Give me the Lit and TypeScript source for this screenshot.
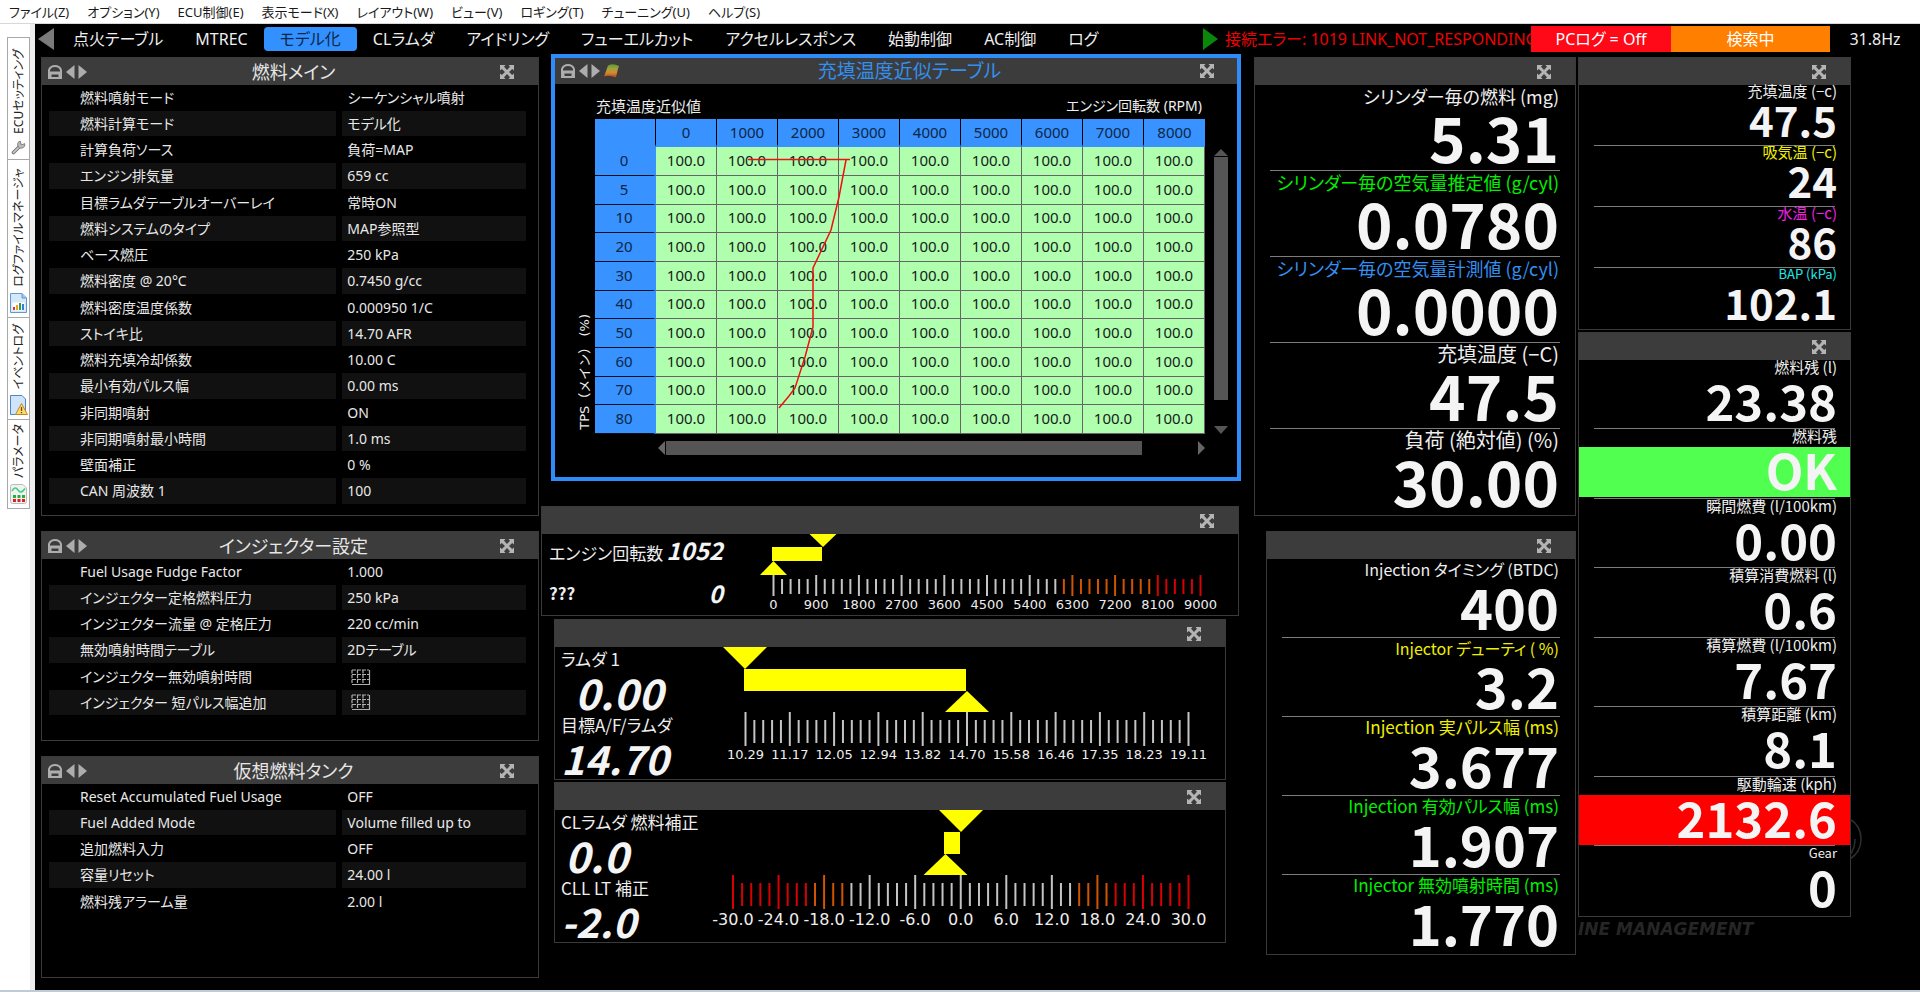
import { LitElement, html, svg, css, nothing } from "lit";
import { customElement, state } from "lit/decorators.js";
import { classMap } from "lit/directives/class-map.js";

const MENUS = ["ファイル(Z)", "オプション(Y)", "ECU制御(E)", "表示モード(X)", "レイアウト(W)", "ビュー(V)", "ロギング(T)", "チューニング(U)", "ヘルプ(S)"];
const TABS = ["点火テーブル", "MTREC", "モデル化", "CLラムダ", "アイドリング", "フューエルカット", "アクセルレスポンス", "始動制御", "AC制御", "ログ"];

type Row = [string, string];
const FUEL_MAIN: Row[] = [
  ["燃料噴射モード", "シーケンシャル噴射"],
  ["燃料計算モード", "モデル化"],
  ["計算負荷ソース", "負荷=MAP"],
  ["エンジン排気量", "659 cc"],
  ["目標ラムダテーブルオーバーレイ", "常時ON"],
  ["燃料システムのタイプ", "MAP参照型"],
  ["ベース燃圧", "250 kPa"],
  ["燃料密度 @ 20°C", "0.7450 g/cc"],
  ["燃料密度温度係数", "0.000950 1/C"],
  ["ストイキ比", "14.70 AFR"],
  ["燃料充填冷却係数", "10.00 C"],
  ["最小有効パルス幅", "0.00 ms"],
  ["非同期噴射", "ON"],
  ["非同期噴射最小時間", "1.0 ms"],
  ["壁面補正", "0 %"],
  ["CAN 周波数 1", "100"],
];
const INJECTOR: Row[] = [
  ["Fuel Usage Fudge Factor", "1.000"],
  ["インジェクター定格燃料圧力", "250 kPa"],
  ["インジェクター流量 @ 定格圧力", "220 cc/min"],
  ["無効噴射時間テーブル", "2Dテーブル"],
  ["インジェクター無効噴射時間", "#grid"],
  ["インジェクター 短パルス幅追加", "#grid"],
];
const TANK: Row[] = [
  ["Reset Accumulated Fuel Usage", "OFF"],
  ["Fuel Added Mode", "Volume filled up to"],
  ["追加燃料入力", "OFF"],
  ["容量リセット", "24.00 l"],
  ["燃料残アラーム量", "2.00 l"],
];

interface Reading { label: string; value: string; tone?: string; size?: string; fill?: string }
const CYLINDER: Reading[] = [
  { label: "シリンダー毎の燃料 (mg)", value: "5.31" },
  { label: "シリンダー毎の空気量推定値 (g/cyl)", value: "0.0780", tone: "green" },
  { label: "シリンダー毎の空気量計測値 (g/cyl)", value: "0.0000", tone: "blue" },
  { label: "充填温度 (−C)", value: "47.5", size: "wide" },
  { label: "負荷 (絶対値) (%)", value: "30.00", size: "wide" },
];
const INJECTION: Reading[] = [
  { label: "Injection タイミング (BTDC)", value: "400", size: "small" },
  { label: "Injector デューティ ( %)", value: "3.2", tone: "yellow", size: "small" },
  { label: "Injection 実パルス幅 (ms)", value: "3.677", tone: "yellow" },
  { label: "Injection 有効パルス幅 (ms)", value: "1.907", tone: "green" },
  { label: "Injector 無効噴射時間 (ms)", value: "1.770", tone: "green" },
];
const TEMPS: Reading[] = [
  { label: "充填温度 (−c)", value: "47.5" },
  { label: "吸気温 (−c)", value: "24", tone: "yellow" },
  { label: "水温 (−c)", value: "86", tone: "magenta" },
  { label: "BAP (kPa)", value: "102.1", tone: "cyan", size: "small" },
];
const TRIP: Reading[] = [
  { label: "燃料残 (l)", value: "23.38" },
  { label: "燃料残", value: "OK", fill: "ok" },
  { label: "瞬間燃費 (l/100km)", value: "0.00" },
  { label: "積算消費燃料 (l)", value: "0.6" },
  { label: "積算燃費 (l/100km)", value: "7.67" },
  { label: "積算距離 (km)", value: "8.1" },
  { label: "駆動輪速 (kph)", value: "2132.6", fill: "alarm" },
  { label: "Gear", value: "0", size: "small" },
];

const RPM = [0, 1000, 2000, 3000, 4000, 5000, 6000, 7000, 8000];
const TPS = [0, 5, 10, 20, 30, 40, 50, 60, 70, 80];

interface Scale {
  w: number; h: number; x0: number; x1: number;
  major: [number, number]; minor: [number, number];
  bar: [number, number, number, number];
  down: number; up: number; half: number; font: number; base: number;
  labels: string[]; zone: (i: number) => string;
}
const GREY = "#c4c4c4", ORANGE = "#d25400", RED = "#d80000";
const RPM_SCALE: Scale = {
  w: 496, h: 81, x0: 31.5, x1: 458.5, major: [41, 62], minor: [45, 60],
  bar: [30, 80, 13, 27], down: 81, up: 31.5, half: 13.5, font: 13, base: 75,
  labels: ["0", "900", "1800", "2700", "3600", "4500", "5400", "6300", "7200", "8100", "9000"],
  zone: (i) => (i >= 45 ? RED : i >= 34 ? ORANGE : GREY),
};
const LAMBDA_SCALE: Scale = {
  w: 525, h: 132, x0: 45.5, x1: 488.5, major: [65, 99], minor: [73, 96],
  bar: [44, 266, 22, 44], down: 45, up: 267, half: 22, font: 13, base: 112,
  labels: ["10.29", "11.17", "12.05", "12.94", "13.82", "14.70", "15.58", "16.46", "17.35", "18.23", "19.11"],
  zone: () => GREY,
};
const TRIM_SCALE: Scale = {
  w: 525, h: 132, x0: 33, x1: 488.5, major: [65, 99], minor: [73, 96],
  bar: [244, 260, 22, 44], down: 261, up: 245.5, half: 22, font: 16, base: 115,
  labels: ["-30.0", "-24.0", "-18.0", "-12.0", "-6.0", "0.0", "6.0", "12.0", "18.0", "24.0", "30.0"],
  zone: (i) => (i <= 8 || i >= 42 ? RED : i <= 12 || i >= 38 ? ORANGE : GREY),
};

const lockIcon = html`<svg width="14" height="14" viewBox="0 0 14 14" aria-hidden="true">
  <path d="M1 7V5Q2.500 1 7 1T13 5V7" fill="none" stroke="#adadad" stroke-width="2"/><path d="M0 6.500H14V14H0ZM3.500 9.500V12H10.500V9.500Z" fill="#adadad" fill-rule="evenodd"/></svg>`;
const stepIcon = html`<svg width="21" height="14" viewBox="0 0 21 14" fill="#adadad" aria-hidden="true">
  <path d="M8.500 0V14L0 7Z"/><path d="M12.500 0V14L21 7Z"/></svg>`;
const surfaceIcon = html`<svg width="15" height="14" viewBox="0 0 15 14" aria-hidden="true">
  <defs><linearGradient id="heat" x1="0" y1="0" x2="0" y2="1"><stop offset="0" stop-color="#5f9a3a"/><stop offset=".35" stop-color="#a8a038"/><stop offset=".65" stop-color="#d08a30"/><stop offset="1" stop-color="#b83c20"/></linearGradient></defs>
  <path d="M4 1.500Q9-1 15 2Q13.500 6 13 9Q12.500 12 11.500 13.500Q6 10.500 0 12.500Q2.500 6 4 1.500Z" fill="url(#heat)"/></svg>`;
const expandIcon = html`<svg width="14" height="14" viewBox="0 0 14 14" fill="#b4b4b4" aria-hidden="true">
  <path d="M0 0H5.500L4 1.800L7 5L10 1.800L8.500 0H14V5.500L12.200 4L9 7L12.200 10L14 8.500V14H8.500L10 12.200L7 9L4 12.200L5.500 14H0V8.500L1.800 10L5 7L1.800 4L0 5.500Z"/></svg>`;
const gridIcon = html`<svg class="gridicon" width="20" height="17" viewBox="0 0 20 17" fill="none" stroke="#b0b0b0" stroke-width="1.200" role="img" aria-label="テーブル">
  <path d="M1 1H18M1 5.500H18M1 10.500H18" stroke-dasharray="4 1"/><path d="M1 15.500H19M18.500 1V16"/><path d="M1 1V14M6.500 1V14M12 1V14" stroke-dasharray="3.500 1.200"/></svg>`;
const wrench = html`<svg width="15" height="15" viewBox="0 0 15 15" aria-hidden="true"><path d="M2.500 12.500L9 6" stroke="#777" stroke-width="3.600" stroke-linecap="round"/><path d="M2.500 12.500L9 6" stroke="#ccc" stroke-width="1.600" stroke-linecap="round"/><path d="M13.500 3.500A3.500 3.500 0 1 1 9.500 1.200L9.800 4.200L12 4.500Z" fill="#bbb" stroke="#777" stroke-width=".9"/></svg>`;
const docIcon = html`<svg width="17" height="20" viewBox="0 0 17 20" aria-hidden="true"><path d="M.5.5H12L16.500 5V19.500H.5Z" fill="#d4e8f8" stroke="#5f9ad0"/><path d="M12 .5V5H16.500" fill="#9cc6ee" stroke="#5f9ad0"/><path d="M2.500 9.500H14.500V17.500H2.500Z" fill="#fff"/><path d="M4 14V17" stroke="#e03030" stroke-width="2"/><path d="M7 12V17" stroke="#f0a020" stroke-width="2"/><path d="M10 10V17" stroke="#30a040" stroke-width="2"/><path d="M13 11V17" stroke="#3080e0" stroke-width="2"/></svg>`;
const eventIcon = html`<svg width="18" height="20" viewBox="0 0 18 20" aria-hidden="true"><path d="M.5.5H12L15.500 4V19.500H.5Z" fill="#cfe4fa" stroke="#4f86c6"/><path d="M11.500 8.500L17.500 19.500H5.500Z" fill="#ffd871" stroke="#c08c20"/><path d="M11.500 12V16M11.500 17V18.200" stroke="#7a4a00" stroke-width="1.300"/></svg>`;
const paramIcon = html`<svg width="17" height="20" viewBox="0 0 17 20" aria-hidden="true"><path d="M2.500.5H13L16.500 4V17.500Q16.500 19.500 14.500 19.500H2.500Q.5 19.500 .5 17.500V2.500Q.5.5 2.500.5Z" fill="#f0f2f2" stroke="#bbb"/><path d="M2 7Q5 1.500 8 6T15 4.500" fill="none" stroke="#40d080" stroke-width="1.600"/><path d="M3 12.500H15" stroke="#20b040" stroke-width="3" stroke-dasharray="3 1.500"/><path d="M3 16.500H15" stroke="#e02020" stroke-width="3" stroke-dasharray="3 1.500"/></svg>`;

@customElement("app-root")
export class AppRoot extends LitElement {
  static styles = css`
    :host { display: block; min-height: 100vh; background: #fff; font-family: "Noto Sans", "Noto Sans CJK JP", sans-serif; font-size: 14px; font-feature-settings: "palt"; color: #eee; }
    * { box-sizing: border-box; }
    button { font: inherit; font-feature-settings: inherit; color: inherit; background: none; border: 0; padding: 0; margin: 0; white-space: nowrap; cursor: pointer; }
    svg { display: block; flex: none; }
    .app { display: flex; flex-direction: column; min-height: 100vh; border-bottom: 2px solid #bfcbd8; }
    .menu { display: flex; gap: 18px; height: 24px; padding-left: 9px; color: #1a1a1a; align-items: center; border-bottom: 1px solid #d8d8d8; }
    .menu button { font-size: 13px; line-height: 20px; }
    .main { display: flex; flex: 1; }
    .side { width: 35px; flex: none; padding: 13px 0 0 7px; border-right: 5px solid #ededed; color: #222; }
    .side button { display: flex; flex-direction: column; align-items: center; justify-content: flex-end; gap: 6px; width: 23px; border: 1px solid #a8a8a8; border-bottom: 0; padding: 6px 0 4px; background: #fff; }
    .side button:last-child { border-bottom: 1px solid #a8a8a8; }
    .side span { writing-mode: vertical-rl; text-orientation: sideways; transform: rotate(180deg); font-size: 12px; line-height: 20px; }
    .side .ecu { height: 122px; } .side .files { height: 158px; } .side .events { height: 102px; } .side .prm { height: 90px; }
    .desk { flex: 1; min-width: 0; background: #000; }

    .tabs { display: flex; align-items: center; height: 30px; padding-left: 3px; font-size: 16px; }
    .tabs .set { display: flex; flex: 1; margin-left: 3px; }
    .tabs .set button { height: 24px; line-height: 24px; padding: 0 16px; border-radius: 4px; }
    .tabs .set button.on { background: #3390ff; color: #0c2746; }
    .error { width: 306px; margin-left: 7px; overflow: hidden; white-space: nowrap; color: #f00000; font-size: 16px; line-height: 26px; }
    .flag { height: 26px; line-height: 26px; text-align: center; font-size: 16px; color: #fff; }
    .pclog { width: 140px; background: #ff0818; }
    .search { width: 159px; background: #ff8000; }
    .hz { width: 90px; text-align: center; font-size: 16px; }

    .board { display: grid; grid-template-columns: 498fr 700fr 333fr 273fr; gap: 2px; padding: 0 69px 11px 6px; align-items: start; }
    .col { display: flex; flex-direction: column; gap: 15px; padding-top: 3px; min-width: 0; }
    .col.mid { gap: 3px; padding-top: 0; }
    .col.cyl { padding-left: 11px; }
    .col.trip { gap: 2px; }

    .panel { border: 1px solid #3a3a3a; background: #000; min-width: 0; }
    .panel header { display: flex; align-items: center; height: 27px; background: #3c3c3c; padding: 0 24px 0 6px; }
    .panel header .tools { display: flex; gap: 4px; align-items: center; }
    .panel h2 { flex: 1; margin: 0; text-align: center; font-size: 18px; line-height: 26px; font-weight: 400; color: #e6e6e6; white-space: nowrap; }
    .map { border: 4px solid #2e8cf8; margin: 0 0 22px 10px; }
    .map header { height: 26px; padding-right: 23px; }
    .map h2 { font-size: 19px; color: #3390f0; }

    .params { width: 100%; border-collapse: separate; border-spacing: 6px 0; table-layout: fixed; padding: 0 6px 0 1px; color: #e8e8e8; font-size: 14px; line-height: 20px; }
    .params th { width: 61%; font-weight: 400; text-align: left; padding: 1px 0 1px 31px; white-space: nowrap; }
    .params td { padding: 1px 0 1px 5px; white-space: nowrap; }
    .params tr { height: 26px; }
    .params tr:nth-child(4n) { height: 27px; }
    .params tr:nth-child(even) > * { background: #111; border-bottom: 1px solid #000; }
    .fuel { padding-bottom: 10px; }
    .inj { padding-bottom: 24px; }
    .tank { padding-bottom: 62px; }
    .gridicon { margin-left: 4px; }

    .mapbody { display: grid; grid-template-columns: 40px 1fr 14px; padding: 11px 9px 22px 0; }
    .axes { grid-column: 2; display: flex; justify-content: space-between; font-size: 15px; line-height: 22px; padding: 0 3px 2px 1px; }
    .axes .x { font-size: 14px; }
    .ylabel { grid-column: 1; grid-row: 2; justify-self: end; align-self: end; writing-mode: vertical-rl; text-orientation: sideways; transform: rotate(180deg); margin-bottom: 4px; font: 13px/20px "DejaVu Sans", "Noto Sans CJK JP", sans-serif; white-space: pre; }
    .gridwrap { grid-column: 2; grid-row: 2; position: relative; }
    .trace { position: absolute; inset: 0; width: 100%; height: 100%; pointer-events: none; }
    .vals { width: 100%; table-layout: fixed; border-collapse: separate; border-spacing: 0; font-size: 15px; line-height: 20px; text-align: center; color: #17221a; }
    .vals th, .vals td { padding: 0 0 3px; font-weight: 400; }
    .vals th { background: #3892ff; color: #0c2746; }
    .vals thead th { height: 28px; padding: 0; border-right: 1px solid #000; border-bottom: 3px solid #3892ff; }
    .vals thead th:last-child { border-right: 0; }
    .vals tbody th { border-bottom: 1px solid #04101e; border-right: 3px solid #3892ff; }
    .vals td { background: #afffaf; border-right: 1px solid #666; border-bottom: 1px solid #666; }
    .vals tbody tr { height: 29px; }
    .vals tbody tr:nth-child(3n) { height: 28px; }
    .vbar { grid-column: 3; grid-row: 2; display: flex; flex-direction: column; margin-top: 30px; }
    .vbar i { height: 243px; background: #555; margin: 1px 0 auto; }
    .hbar { grid-column: 2; display: flex; margin: 7px 0 0 63px; }
    .hbar i { width: 87%; background: #555; margin: 0 auto 0 1px; }
    .mapbody .gridwrap, .mapbody .axes, .mapbody .hbar { margin-right: 9px; }

    .gauge { display: flex; }
    .gauge svg { flex: 1; min-width: 0; height: auto; }
    .gauge text { fill: #eee; text-anchor: middle; font-family: "DejaVu Sans", sans-serif; }
    .info { flex: none; white-space: nowrap; font-family: "Noto Sans CJK JP", sans-serif; }
    .info b { font-style: italic; color: #f4f4f4; font-weight: 700; }
    .info.pair { width: 200px; display: grid; grid-template-columns: auto auto; justify-content: space-between; align-content: start; padding: 0 19px 0 7px; font-size: 17px; line-height: 38px; }
    .info.pair b { font-size: 24px; line-height: 32px; text-align: right; }
    .info.pair .q { font-weight: 700; }
    .info.pair .q, .info.pair .q + b { line-height: 42px; }
    .info.stack { width: 145px; padding-left: 6px; font-size: 17px; }
    .info.stack span { display: block; line-height: 24px; }
    .info.stack b { display: block; font-size: 42px; line-height: 42px; }
    .info.stack b:last-child { font-size: 40px; }
    .info.stack .first { padding-left: 14px; }
    .info.stack .near { padding-left: 4px; }
    .inset { margin: 0 15px 0 13px; }
    .inset + .inset { margin-top: -1px; }
    .rpm { margin-right: 2px; }

    .readout { font-family: "Noto Sans CJK JP", sans-serif; text-align: right; white-space: nowrap; }
    .readout dl { margin: 0; }
    .readout dl > div::after { content: ""; display: block; height: 1px; margin: 0 15px; background: #7c7c7c; }
    .readout dl > div:last-child::after { background: none; }
    .readout dt { padding-right: 16px; }
    .readout dd { margin: 0; padding-right: 16px; font-weight: 700; color: #f4f4f4; }
    .big dt { font-size: 18px; line-height: 22px; }
    .big dt.wide { font-size: 20px; }
    .big dd { font-size: 62px; line-height: 59px; padding-bottom: 4px; }
    .medium { margin-left: 12px; }
    .medium dt { font-size: 17px; line-height: 20px; }
    .medium dt.small { font-size: 16px; }
    .medium dd { font-size: 56px; line-height: 54px; padding-bottom: 4px; }
    .temps dt, .temps dd, .log dt, .log dd { padding-right: 13px; }
    .temps dt { font-size: 15px; line-height: 12px; }
    .temps dd { font-size: 42px; line-height: 43px; padding-bottom: 5px; }
    .log { position: relative; }
    .log dt { font-size: 15px; line-height: 14px; margin-bottom: 4px; }
    .log dd { font-size: 49px; line-height: 44px; padding-bottom: 6px; }
    .log dl > div:nth-child(even) dd { margin-bottom: 1px; }
    .temps dt.small, .log dt.small { font-size: 13px; }
    .green { color: #00f000; } .blue { color: #3390f0; } .yellow { color: #f0f000; }
    .magenta { color: #f020e0; } .cyan { color: #20e8e8; }
    .ok { background: #50ff50; } .alarm { background: #f00; }
    .ring { position: absolute; left: 100%; bottom: 54px; }
    .mark { font: italic 700 17px/20px "DejaVu Sans", sans-serif; color: #262626; white-space: nowrap; }
  `;

  @state() private tab = "モデル化";

  private head(title = "", tools: unknown = nothing) {
    return html`<header>${tools}<h2>${title}</h2><button aria-label="拡大">${expandIcon}</button></header>`;
  }

  private tools(surface = false) {
    return html`<div class="tools">${lockIcon}${stepIcon}${surface ? surfaceIcon : nothing}</div>`;
  }

  private params(title: string, cls: string, rows: Row[]) {
    return html`<section class="panel ${cls}">${this.head(title, this.tools())}
      <table class="params"><tbody>
        ${rows.map(([k, v]) => html`<tr><th scope="row">${k}</th><td>${v === "#grid" ? gridIcon : v}</td></tr>`)}
      </tbody></table></section>`;
  }

  private readout(cls: string, items: Reading[], extra: unknown = nothing) {
    return html`<section class="panel readout ${cls}">${this.head()}
      <dl>${items.map((r) => html`<div><dt class="${r.tone ?? ""} ${r.size ?? ""}">${r.label}</dt><dd class=${r.fill ?? ""}>${r.value}</dd></div>`)}</dl>${extra}</section>`;
  }

  private scale(s: Scale) {
    const step = (s.x1 - s.x0) / 50;
    const [bx0, bx1, by0, by1] = s.bar;
    const ticks = Array.from({ length: 51 }, (_, i) => {
      const [a, b] = i % 5 ? s.minor : s.major;
      const x = s.x0 + i * step;
      return svg`<line x1=${x} x2=${x} y1=${a} y2=${b} stroke=${s.zone(i)} stroke-width="2"/>`;
    });
    return html`<svg viewBox="0 0 ${s.w} ${s.h}" role="img">
      ${ticks}
      <g fill="#ffff00">
        <rect x=${bx0} y=${by0} width=${bx1 - bx0} height=${by1 - by0}/>
        <path d="M${s.down - s.half} 0H${s.down + s.half}L${s.down} ${by0}Z"/>
        <path d="M${s.up - s.half} ${s.major[0]}H${s.up + s.half}L${s.up} ${by1}Z"/>
      </g>
      ${s.labels.map((t, i) => svg`<text x=${s.x0 + i * 5 * step} y=${s.base} font-size=${s.font}>${t}</text>`)}
    </svg>`;
  }

  private map() {
    return html`<section class="panel map">${this.head("充填温度近似テーブル", this.tools(true))}
      <div class="mapbody">
        <div class="axes"><span>充填温度近似値</span><span class="x">エンジン回転数 (RPM)</span></div>
        <div class="ylabel">TPS（メイン） (%)</div>
        <div class="gridwrap">
          <table class="vals">
            <thead><tr><th></th>${RPM.map((r) => html`<th scope="col">${r}</th>`)}</tr></thead>
            <tbody>${TPS.map((t) => html`<tr><th scope="row">${t}</th>${RPM.map(() => html`<td>100.0</td>`)}</tr>`)}</tbody>
          </table>
          <svg class="trace" viewBox="0 0 610 315" preserveAspectRatio="none" fill="none" stroke="#f01010" stroke-width="1.500" aria-hidden="true">
            <path d="M153 40.500H255M251 41L244 78L236 111L218 149V208L210 238L200 269L194 277L184 289"/>
          </svg>
        </div>
        <div class="vbar"><svg width="14" height="7" viewBox="0 0 14 7" fill="#555"><path d="M0 7L7 0L14 7Z"/></svg><i></i><svg width="14" height="8" viewBox="0 0 14 8" fill="#555"><path d="M0 0H14L7 8Z"/></svg></div>
        <div class="hbar"><svg width="7" height="14" viewBox="0 0 7 14" fill="#666"><path d="M7 0V14L0 7Z"/></svg><i></i><svg width="7" height="14" viewBox="0 0 7 14" fill="#666"><path d="M0 0V14L7 7Z"/></svg></div>
      </div></section>`;
  }

  render() {
    return html`<div class="app">
      <nav class="menu">${MENUS.map((m) => html`<button>${m}</button>`)}</nav>
      <div class="main">
        <nav class="side">
          <button class="ecu"><span>ECUセッティング</span>${wrench}</button>
          <button class="files"><span>ログファイルマネージャ</span>${docIcon}</button>
          <button class="events"><span>イベントログ</span>${eventIcon}</button>
          <button class="prm"><span>パラメータ</span>${paramIcon}</button>
        </nav>
        <div class="desk">
          <div class="tabs">
            <button aria-label="前へ"><svg width="16" height="22" viewBox="0 0 16 22" fill="#7a7a7a"><path d="M16 0V22L0 11Z"/></svg></button>
            <div class="set">${TABS.map((t) => html`<button class=${classMap({ on: t === this.tab })} @click=${() => (this.tab = t)}>${t}</button>`)}</div>
            <button aria-label="次へ"><svg width="15" height="22" viewBox="0 0 15 22" fill="#0a860a"><path d="M0 0V22L15 11Z"/></svg></button>
            <div class="error">接続エラー: 1019 LINK_NOT_RESPONDING</div>
            <button class="flag pclog">PCログ = Off</button>
            <div class="flag search">検索中</div>
            <div class="hz">31.8Hz</div>
          </div>
          <div class="board">
            <div class="col">
              ${this.params("燃料メイン", "fuel", FUEL_MAIN)}
              ${this.params("インジェクター設定", "inj", INJECTOR)}
              ${this.params("仮想燃料タンク", "tank", TANK)}
            </div>
            <div class="col mid">
              ${this.map()}
              <section class="panel rpm">${this.head()}<div class="gauge">
                <div class="info pair"><span>エンジン回転数</span><b>1052</b><span class="q">???</span><b>0</b></div>${this.scale(RPM_SCALE)}</div></section>
              <section class="panel inset">${this.head()}<div class="gauge">
                <div class="info stack"><span>ラムダ 1</span><b class="first">0.00</b><span>目標A/F/ラムダ</span><b>14.70</b></div>${this.scale(LAMBDA_SCALE)}</div></section>
              <section class="panel inset">${this.head()}<div class="gauge">
                <div class="info stack"><span>CLラムダ 燃料補正</span><b class="near">0.0</b><span>CLL LT 補正</span><b>-2.0</b></div>${this.scale(TRIM_SCALE)}</div></section>
            </div>
            <div class="col cyl">
              ${this.readout("big", CYLINDER)}
              ${this.readout("medium", INJECTION)}
            </div>
            <div class="col trip">
              ${this.readout("temps", TEMPS)}
              ${this.readout("log", TRIP, html`<svg class="ring" width="12" height="46" viewBox="0 0 12 46" fill="none" stroke="#2e2e2e" stroke-width="1.500" aria-hidden="true"><path d="M0 3Q11 10 11 23T0 43M5 23Q5 32 0 39"/></svg>`)}
              <div class="mark">INE MANAGEMENT</div>
            </div>
          </div>
        </div>
      </div>
    </div>`;
  }
}
